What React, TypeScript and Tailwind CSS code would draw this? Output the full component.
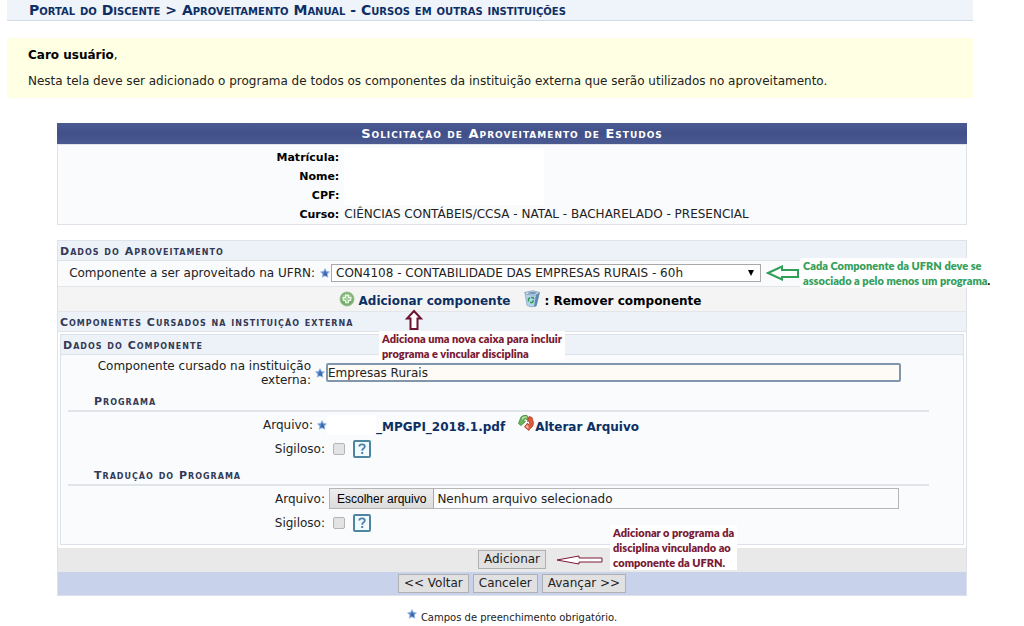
import type { ReactNode } from "react"
import clsx from "clsx"

function Star() {
  return (
    <svg viewBox="0 0 20 20" className="size-[10px] shrink-0" aria-hidden="true">
      <path d="M10 1 L12.8 6.6 L19 7.6 L14.6 12 L15.6 18.6 L10 15.6 L4.4 18.6 L5.4 12 L1 7.6 L7.2 6.6 Z" fill="#5c8acb" stroke="#a3bfe4" strokeWidth="1.5" />
      <path d="M10 5 L14 12 L14.5 17 L10 14.5 L7 15 Z" fill="#3a66ab" />
    </svg>
  )
}

function PlusIcon() {
  return (
    <svg viewBox="0 0 16 16" className="size-4 shrink-0" aria-hidden="true">
      <circle cx="8" cy="8" r="7" fill="#74ae69" stroke="#9dbd97" />
      <path d="M2.5 8a5.5 5.5 0 0 1 11 0z" fill="#9acb8d" />
      <path d="M6.500 4.200h3v2.300h2.300v3H9.500v2.300h-3V9.500H4.200v-3h2.300z" fill="#a5d39a" stroke="#fff" />
    </svg>
  )
}

function BinIcon() {
  return (
    <svg viewBox="0 0 18 18" className="size-[18px] shrink-0" aria-hidden="true">
      <path d="M2 3 L4 15.500 Q8 18 13 16 L16.500 3 Z" fill="#b5d3ea" stroke="#8fabc6" strokeWidth=".8" />
      <path d="M13 4.500 L16.500 3 L13.500 16 L11 16.800 Z" fill="#5f87b3" />
      <path d="M1.500 2.500 L10 .8 L16.800 2.500 L12.500 5 L4 4.500 Z" fill="#dcebf6" stroke="#7c9bb8" strokeWidth=".8" />
      <path d="M4.500 2.800 L10 1.800 L14.500 2.700 L12 3.900 L5.500 3.700 Z" fill="#6f93b8" />
      <path d="M5.500 11.500 V8.800 L7 7.600 M8 7.400 h2 l1 1.800 M10.500 10.500 l-1.200 2 H7" fill="none" stroke="#2e9b52" strokeWidth="1.500" />
    </svg>
  )
}

function SwapIcon() {
  return (
    <svg viewBox="0 0 18 18" className="size-[18px] shrink-0" aria-hidden="true">
      <path d="M1.500 9.500 L4 3 Q6 .8 10 1.500 L12 6 L8.500 5 Q7 4.500 6.500 6.500 L8.500 7.500 L4 11.500 Z" fill="#6bb558" stroke="#3f8738" strokeWidth=".8" />
      <path d="M4.500 4 Q6 2 9.500 2.300 L10 4 Q7 3 5.500 6 Z" fill="#b4dfa5" />
      <path d="M12 2.500 L15 3.500 L16.500 9 Q16.500 13 12.500 15 L12 16.500 L7.500 13 L10.500 9 L11.500 11 Q13.500 9.500 12 7 L10.500 7.500 Z" fill="#dd5a3c" stroke="#b23a26" strokeWidth=".8" />
      <path d="M8.500 13 L10.500 10.500 L11.500 12.500 L11.500 15 Z" fill="#f3b3a0" />
    </svg>
  )
}

function HelpButton() {
  return (
    <button type="button" aria-label="Ajuda" className="flex size-[18px] shrink-0 items-center justify-center rounded-[2px] border-2 border-[#4d86a0] bg-[#f1fafd]">
      <svg viewBox="0 0 10 12" className="h-3 w-[10px]" aria-hidden="true">
        <path d="M2.300 3.600 Q2.300 1.300 5 1.300 Q7.800 1.300 7.800 3.400 Q7.800 4.600 6.400 5.500 Q5.200 6.300 5.200 7.800" fill="none" stroke="#4a80a8" strokeWidth="1.800" />
        <rect x="4.200" y="9" width="2" height="2" fill="#4a80a8" />
      </svg>
    </button>
  )
}

function Legend({ children }: { children: ReactNode }) {
  return (
    <h2 className="h-5 border-b border-[#dde2ea] bg-[#edf1f8] pl-[2px] text-[11px] leading-[22px] font-bold tracking-[1px] text-[#333a55] [font-variant:small-caps]">
      {children}
    </h2>
  )
}

function Section({ children, className }: { children: ReactNode; className?: string }) {
  return (
    <h3 className={clsx("mr-[34px] ml-[7px] h-[21px] border-b-2 border-[#e0e3e7] pl-[26px] text-[11px] leading-[22px] font-bold tracking-[1px] text-[#333a55] [font-variant:small-caps]", className)}>
      {children}
    </h3>
  )
}

function Note({ children, className }: { children: ReactNode; className?: string }) {
  return (
    <p className={clsx("absolute z-10 bg-white px-[3px] font-[Lato,sans-serif] text-[11px] leading-[15px] font-extrabold whitespace-nowrap", className)}>
      {children}
    </p>
  )
}

const student = [
  { label: "Matrícula:", value: "" },
  { label: "Nome:", value: "" },
  { label: "CPF:", value: "" },
  { label: "Curso:", value: "CIÊNCIAS CONTÁBEIS/CCSA - NATAL - BACHARELADO - PRESENCIAL" },
]

const buttonStyle = "h-[19px] border border-[#b0b0b0] bg-[#e1e1e1] px-[5px] text-[12px] leading-[17px] text-[#222]"

function Confidential({ id }: { id: string }) {
  return (
    <div className="flex h-[22px] items-center">
      <label htmlFor={id} className="w-[264px] text-right">Sigiloso:</label>
      <input id={id} type="checkbox" className="mx-2 size-3 appearance-none rounded-[2px] border border-[#b4b4b4] bg-[#e3e3e3]" />
      <HelpButton />
    </div>
  )
}

export default function App() {
  return (
    <main className="min-h-screen bg-white pr-[51px] pl-[7px] font-['DejaVu_Sans',Verdana,sans-serif] text-[12px] text-[#222]">
      <h1 className="h-[21px] border-b border-[#d0dbe6] bg-[#eff3fa] pl-[22px] text-[14px] leading-5 font-bold text-[#0d2f63] [font-variant:small-caps]">
        Portal do Discente &gt; Aproveitamento Manual - Cursos em outras instituições
      </h1>

      <section className="mt-[17px] flex h-[60px] flex-col gap-[10px] bg-[#ffffe4] pt-[9px] pl-[21px] leading-4">
        <p><b className="text-black">Caro usuário</b>,</p>
        <p>Nesta tela deve ser adicionado o programa de todos os componentes da instituição externa que serão utilizados no aproveitamento.</p>
      </section>

      <div className="mt-[25px] mr-[6px] ml-[50px]">
        <table className="w-full border border-[#dfe2e8] bg-[#f9fbfd]">
          <caption className="h-[21px] bg-linear-to-b from-[#4c5a92] via-[#42508a] to-[#4c5a92] text-[13px] leading-[22px] font-bold tracking-[1px] text-white [font-variant:small-caps]">
            Solicitação de Aproveitamento de Estudos
          </caption>
          <tbody>
            {student.map((row) => (
              <tr key={row.label} className="h-[19px] first:h-[22px]">
                <th scope="row" className="w-[31%] p-0 text-right align-bottom text-[11px] leading-[19px] text-black">{row.label}</th>
                <td className="p-0 pl-[5px] align-bottom leading-[19px]">
                  {row.value || <span className="block h-[19px] w-[200px] bg-white" />}
                </td>
              </tr>
            ))}
          </tbody>
        </table>

        <form className="mt-[15px] border border-[#dde2ea]" onSubmit={(e) => e.preventDefault()}>
          <Legend>Dados do Aproveitamento</Legend>

          <div className="relative flex h-[26px] items-center border-b border-[#e2e5ea] bg-[#fafbfd]">
            <label htmlFor="ufrn" className="w-[257px] text-right">Componente a ser aproveitado na UFRN:</label>
            <span className="mr-px ml-[5px]"><Star /></span>
            <div className="relative w-[430px]">
              <select id="ufrn" className="h-[18px] w-full appearance-none border border-[#a9a9a9] bg-white pl-1 leading-4 text-[#222]">
                <option>CON4108 - CONTABILIDADE DAS EMPRESAS RURAIS - 60h</option>
              </select>
              <svg viewBox="0 0 8 8" className="pointer-events-none absolute top-[5px] right-[6px] size-2" aria-hidden="true">
                <path d="M1 1h6L4 7z" fill="#000" />
              </svg>
            </div>
            <svg viewBox="0 0 34 16" className="ml-[5px] h-4 w-[34px]" aria-hidden="true">
              <path d="M2 8 L16 1.500 V5 H32 V12 H16 V14.500 Z" fill="#fff" stroke="#2f9e57" strokeWidth="2" />
            </svg>
            <Note className="left-[742px] text-[#35a05c]">
              Cada Componente da UFRN deve se<br />associado a pelo menos um programa<span className="text-black">.</span>
            </Note>
          </div>

          <div className="relative flex h-[25px] items-center justify-center gap-3 border-b border-[#e2e5ea] bg-[#f4f4f4] pl-4 font-bold">
            <a href="#adicionar" className="flex items-center gap-1 text-[#0d2f63]">
              <PlusIcon />
              <span className="pt-1">Adicionar componente</span>
            </a>
            <span className="flex items-center gap-1 text-black">
              <BinIcon />
              <span className="pt-1">: Remover componente</span>
            </span>
            <svg viewBox="0 0 18 22" className="absolute top-[22px] left-[347px] z-20 h-[22px] w-[18px]" aria-hidden="true">
              <path d="M9 2 L16 9.500 H12.500 V20 H5.500 V9.500 H2 Z" fill="#fff" stroke="#6d1231" strokeWidth="2" />
            </svg>
            <Note className="top-[44px] left-[321px] text-[#7a1a35]">
              Adiciona uma nova caixa para incluir<br />programa e vincular disciplina
            </Note>
          </div>

          <Legend>Componentes Cursados na instituição externa</Legend>

          <div className="mx-[2px] mt-[2px] mb-[3px] border border-[#dde2ea] bg-[#f9fbfd] pb-[10px]">
            <Legend>Dados do Componente</Legend>

            <div className="flex h-[36px] items-center">
              <label htmlFor="externa" className="w-[250px] pl-8 text-right leading-[14px]">Componente cursado na instituição externa:</label>
              <span className="mr-px ml-1"><Star /></span>
              <input id="externa" type="text" defaultValue="Empresas Rurais" className="mr-[62px] h-[19px] min-w-0 flex-1 rounded-[2px] border-2 border-[#8296ab] bg-[#fefaf6] text-[#222]" />
            </div>

            <Section>Programa</Section>
            <div className="flex h-[26px] items-center">
              <span className="w-[252px] text-right">Arquivo:</span>
              <span className="ml-1"><Star /></span>
              <span className="h-5 w-[49px] bg-white" />
              <a href="#arquivo" className="mr-3 pt-1 font-bold text-[#0d2f63]">_MPGPI_2018.1.pdf</a>
              <a href="#alterar" className="flex items-start font-bold text-[#0d2f63]">
                <SwapIcon />
                <span className="pt-1">Alterar Arquivo</span>
              </a>
            </div>
            <Confidential id="sigiloso-programa" />

            <Section className="mt-[5px]">Tradução do Programa</Section>
            <div className="flex h-[26px] items-center">
              <span className="w-[264px] text-right">Arquivo:</span>
              <label className="mr-[64px] ml-1 flex h-[21px] flex-1 items-center border border-[#b5b5b5]">
                <input type="file" className="sr-only" />
                <span className="flex h-full items-center border-r border-[#a9a9a9] bg-linear-to-b from-[#eeeeee] to-[#dcdcdc] px-[7px] font-['Liberation_Sans',Arial,sans-serif] text-black">Escolher arquivo</span>
                <span className="ml-[3px]">Nenhum arquivo selecionado</span>
              </label>
            </div>
            <Confidential id="sigiloso-traducao" />
          </div>

          <div className="relative flex h-6 items-center justify-center bg-[#e9e9e9]">
            <button type="submit" className={buttonStyle}>Adicionar</button>
            <svg viewBox="0 0 48 10" className="absolute left-[498px] h-[10px] w-12" aria-hidden="true">
              <path d="M1 5 L23 1 V3 H46 V7 H23 V9 Z" fill="#fff" stroke="#7a1a35" />
            </svg>
            <Note className="bottom-[2px] left-[552px] text-[#7a1a35]">
              Adicionar o programa da<br />disciplina vinculando ao<br />componente da UFRN.
            </Note>
          </div>

          <div className="flex h-[23px] items-center justify-center gap-1 bg-[#c8d3eb]">
            <button type="button" className={buttonStyle}>&lt;&lt; Voltar</button>
            <button type="button" className={buttonStyle}>Canceler</button>
            <button type="button" className={buttonStyle}>Avançar &gt;&gt;</button>
          </div>
        </form>

        <p className="mt-[13px] flex items-start justify-center gap-1 text-[10px] leading-[18px]">
          <Star />
          Campos de preenchimento obrigatório.
        </p>
      </div>
    </main>
  )
}
